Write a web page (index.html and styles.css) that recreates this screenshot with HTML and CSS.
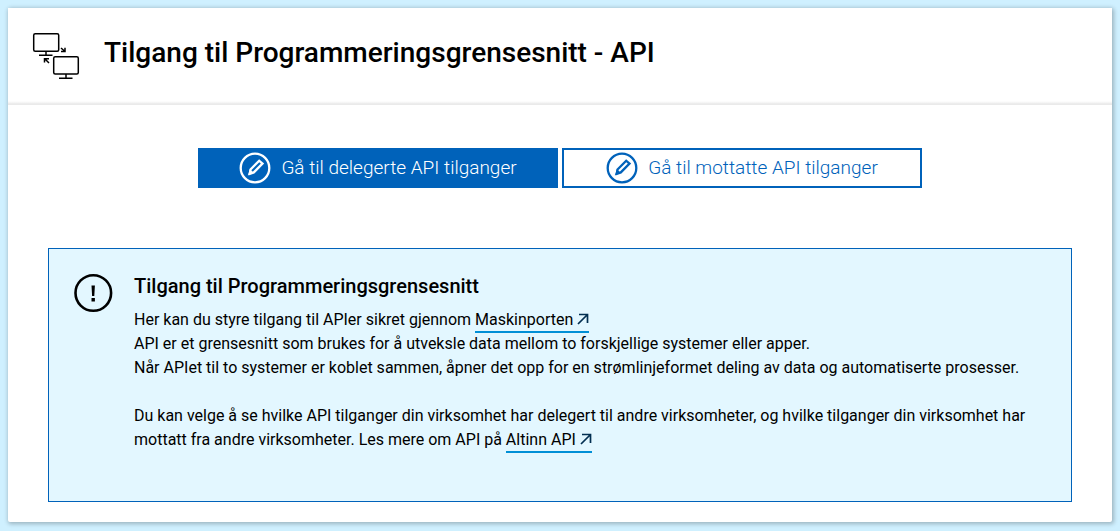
FILE: index.html
```html
<!DOCTYPE html>
<html lang="nb">
<head>
<meta charset="utf-8">
<meta name="viewport" content="width=device-width, initial-scale=1">
<title>Tilgang til Programmeringsgrensesnitt - API</title>
<link rel="stylesheet" href="styles.css">
</head>
<body>
<main class="page">
  <header class="page-header">
    <svg class="header-icon" viewBox="0 0 48 48" fill="none" stroke="#000" stroke-width="1.5" aria-hidden="true">
      <rect x="1.7" y="1.7" width="25" height="17.6" rx="1.5"/>
      <path d="M14 19.5v3.8M7 23.3h13.5"/>
      <rect x="21.7" y="24.7" width="24.6" height="17.3" rx="1.5"/>
      <path d="M34 42v4M27 46.2h13.5"/>
      <path d="M29 16l3.500 3M33 15.800v3.700h-4M17 31l-4-4M12.500 30.500v-3.700h4.500"/>
    </svg>
    <h1 class="page-title">Tilgang til Programmeringsgrensesnitt - API</h1>
  </header>
  <section class="page-content">
    <nav class="actions" aria-label="API tilganger">
      <button type="button" class="button button-primary">
        <svg class="button-icon" viewBox="0 0 32 32" fill="none" stroke="currentColor" stroke-width="2.300" aria-hidden="true">
          <circle cx="16" cy="16" r="14.300"/>
          <path d="M11.500 17.500l8.700-8.800 3.300 2.800-8.700 8.900-3.900 1.400z"/>
          <path d="M8.800 23.300l2-5.800 4.200 3.300z" fill="currentColor" stroke="none"/>
        </svg>
        <span class="button-label">Gå til delegerte API tilganger</span>
      </button>
      <button type="button" class="button button-secondary">
        <svg class="button-icon" viewBox="0 0 32 32" fill="none" stroke="currentColor" stroke-width="2.300" aria-hidden="true">
          <circle cx="16" cy="16" r="14.300"/>
          <path d="M11.500 17.500l8.700-8.800 3.300 2.800-8.700 8.900-3.900 1.400z"/>
          <path d="M8.800 23.300l2-5.800 4.200 3.300z" fill="currentColor" stroke="none"/>
        </svg>
        <span class="button-label">Gå til mottatte API tilganger</span>
      </button>
    </nav>
    <article class="info-panel">
      <svg class="info-icon" viewBox="0 0 40 40" aria-hidden="true">
        <circle cx="20.300" cy="20" r="17.800" fill="none" stroke="#000" stroke-width="2.600"/>
        <path d="M18.500 12.500h3.400l-.6 10.500h-2.200zM18.500 25h3.400v3.500h-3.400z"/>
      </svg>
      <div class="info-body">
        <h2 class="info-title">Tilgang til Programmeringsgrensesnitt</h2>
        <p class="info-text">Her kan du styre tilgang til APIer sikret gjennom <a class="link" href="#maskinporten">Maskinporten <svg class="link-icon" viewBox="0 0 12 12" aria-hidden="true"><path d="M1 11L10.500 1.500M2 1.500h8.500v8.500" fill="none" stroke="#022f51" stroke-width="1.700"/></svg></a><br>API er et grensesnitt som brukes for å utveksle data mellom to forskjellige systemer eller apper.<br>Når APIet til to systemer er koblet sammen, åpner det opp for en strømlinjeformet deling av data og automatiserte prosesser.</p>
        <p class="info-text">Du kan velge å se hvilke API tilganger din virksomhet har delegert til andre virksomheter, og hvilke tilganger din virksomhet har <span>mottatt fra andre virksomheter. Les mere om API på </span><a class="link" href="#altinn-api">Altinn API <svg class="link-icon" viewBox="0 0 12 12" aria-hidden="true"><path d="M1 11L10.500 1.500M2 1.500h8.500v8.500" fill="none" stroke="#022f51" stroke-width="1.700"/></svg></a></p>
      </div>
    </article>
  </section>
</main>
</body>
</html>
```
FILE: styles.css
```css
* {
  box-sizing: border-box;
}

body {
  margin: 0;
  padding: 8px 8px 9px;
  background: #cff0ff;
  color: #000;
  font-family: Roboto, "Liberation Sans", sans-serif;
  font-size: 16px;
  line-height: 24px;
}

.page {
  border-radius: 2px;
  background: #fff;
  box-shadow: 1px 1px 4px 1px rgba(0, 0, 0, 0.25);
}

.page-header {
  display: flex;
  align-items: center;
  gap: 24px;
  padding: 24px 24px 25px;
  background: linear-gradient(to top, #ececec, #e8e8e8 1px, #f2f2f2 2px, #fff 4px);
}

.header-icon {
  flex: none;
  width: 48px;
  height: 48px;
}

.page-title {
  margin: 0 0 6px;
  font-size: 28px;
  line-height: 36px;
  font-weight: 500;
}

.page-content {
  padding: 43px 40px 20px;
}

.actions {
  display: flex;
  justify-content: center;
  gap: 4px;
}

.button {
  display: flex;
  align-items: center;
  justify-content: center;
  gap: 10px;
  width: 360px;
  height: 40px;
  padding: 0;
  border: 2px solid #0062ba;
  font-family: inherit;
  font-size: 19px;
  font-weight: 300;
  cursor: pointer;
}

.button-primary {
  background: #0062ba;
  color: #fff;
}

.button-secondary {
  background: #fff;
  color: #0062ba;
}

.button-icon {
  flex: none;
  width: 32px;
  height: 32px;
}

.button-label {
  padding-bottom: 2px;
}

.info-panel {
  display: flex;
  align-items: flex-start;
  gap: 21px;
  margin-top: 60px;
  padding: 23px 24px 25px;
  border: 1px solid #0062ba;
  background: #e3f7ff;
}

.info-icon {
  flex: none;
  width: 40px;
  height: 40px;
  margin-top: 1px;
}

.info-body {
  flex: 1;
}

.info-title {
  margin: 0 0 8px;
  font-size: 20px;
  line-height: 28px;
  font-weight: 500;
}

.info-text {
  margin: 0 0 24px;
  font-weight: 400;
}

.link {
  padding-bottom: 2px;
  border-bottom: 2px solid #008fd6;
  color: inherit;
  text-decoration: none;
}

.link-icon {
  width: 12px;
  height: 12px;
}
```
